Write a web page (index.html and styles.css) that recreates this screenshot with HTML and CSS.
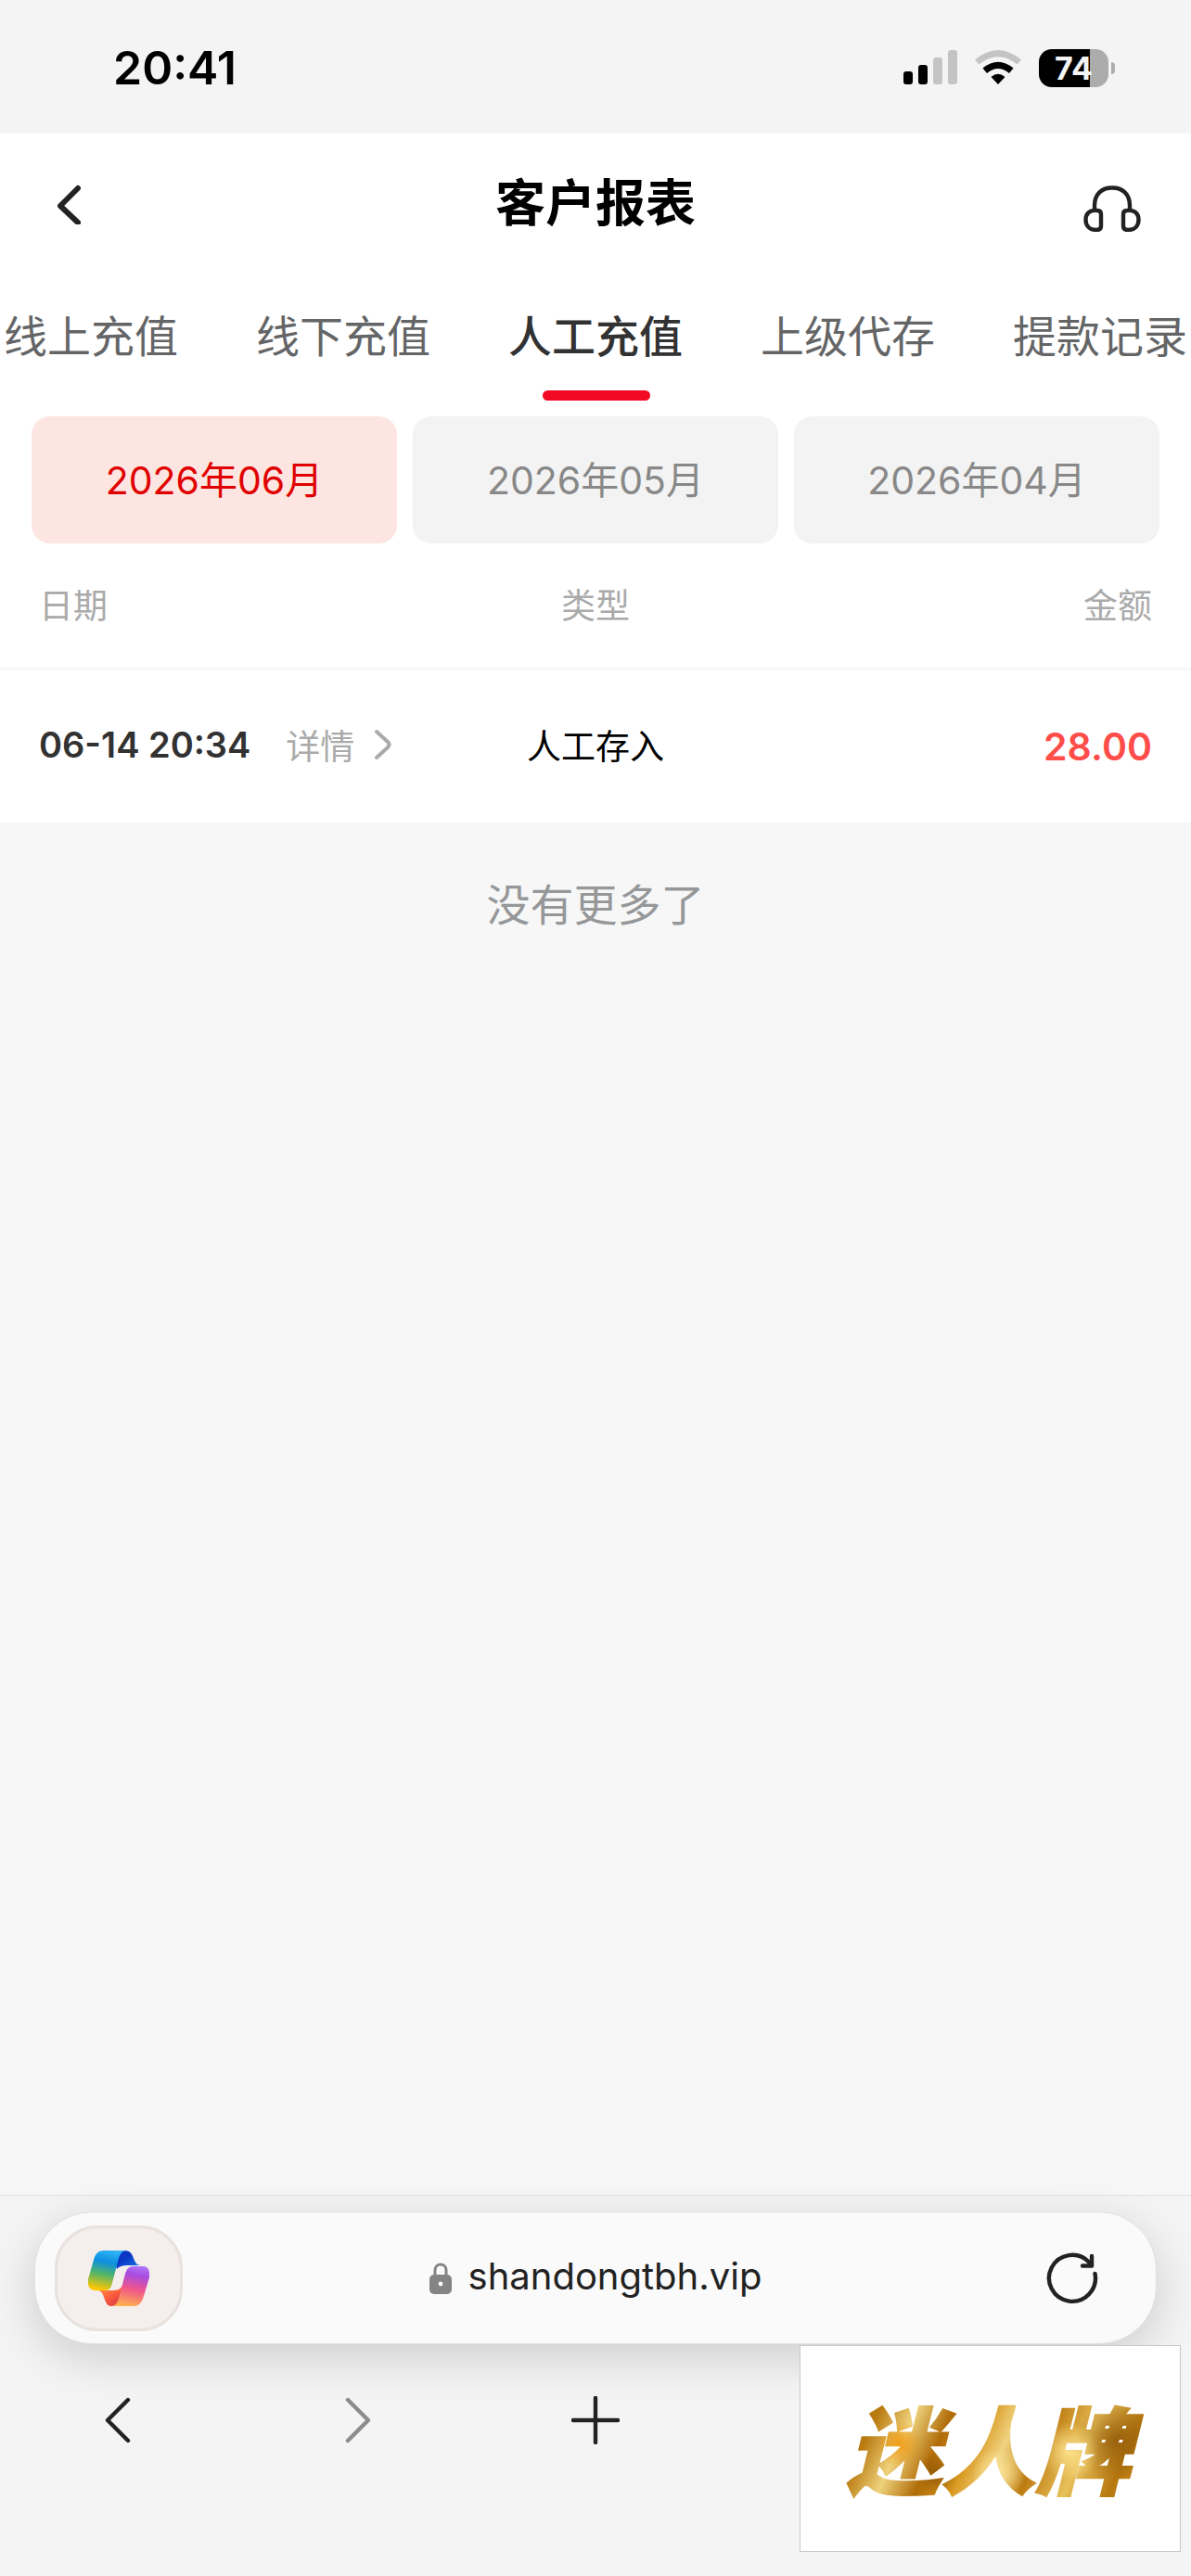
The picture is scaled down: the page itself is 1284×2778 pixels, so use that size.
FILE: index.html
```html
<!DOCTYPE html>
<html lang="zh-CN">
<head>
    <meta charset="UTF-8">
    <meta name="viewport" content="width=device-width, initial-scale=1.0">
    <title>客户报表</title>
    <link rel="stylesheet" href="styles.css">
</head>
<body>

    <div class="status-bar">
        <span class="clock">20:41</span>
        <div class="status-icons">
            <svg width="58" height="38" viewBox="0 0 58 38">
                <rect x="0" y="23" width="10" height="14" rx="3"/>
                <rect x="16" y="16" width="10" height="21" rx="3"/>
                <rect x="32" y="8" width="10" height="29" rx="3" fill="#c4c4c4"/>
                <rect x="48" y="0" width="10" height="37" rx="3" fill="#c4c4c4"/>
            </svg>
            <svg width="50" height="38" viewBox="0 0 50 38">
                <path d="M0 10.500Q25 -10.500 50 10.500L45.500 15.500Q25 -1 4.500 15.500Z" fill="#c4c4c4"/>
                <path d="M8.500 19.500Q25 6 41.500 19.500L37 25Q25 15 13 25Z"/>
                <path d="M17.500 29Q25 22.500 32.500 29L25 37Z"/>
            </svg>
            <div class="battery"><span>74</span></div>
        </div>
    </div>

    <header class="nav-bar">
        <button class="icon-btn" aria-label="返回">
            <svg width="36" height="44" viewBox="-6 0 36 44" fill="none" stroke="#222" stroke-width="6" stroke-linecap="round" stroke-linejoin="round">
                <path d="M24 5L5 24L24 42"/>
            </svg>
        </button>
        <h1>客户报表</h1>
        <button class="icon-btn" aria-label="客服">
            <svg width="62" height="52" viewBox="0 0 62 52" fill="none" stroke="#222" stroke-width="4.400">
                <path d="M12 29V24C12 11 20 4.500 31 4.500S50 11 50 24V29"/>
                <path d="M15 29C6 28 2.500 33 2.500 39S6 50 14 50Q19 50 19 46V33Q19 29 15 29Z"/>
                <path d="M47 29C56 28 59.500 33 59.500 39S56 50 48 50Q43 50 43 46V33Q43 29 47 29Z"/>
            </svg>
        </button>
    </header>

    <nav class="tabs">
        <a href="#">线上充值</a>
        <a href="#">线下充值</a>
        <a href="#" class="active">人工充值</a>
        <a href="#">上级代存</a>
        <a href="#">提款记录</a>
    </nav>

    <div class="months">
        <button class="active">2026年06月</button>
        <button>2026年05月</button>
        <button>2026年04月</button>
    </div>

    <table class="records">
        <thead>
            <tr>
                <th>日期</th>
                <th>类型</th>
                <th>金额</th>
            </tr>
        </thead>
        <tbody>
            <tr>
                <td>
                    <div class="date-cell">
                        <span class="date">06-14 20:34</span>
                        <a href="#" class="detail">详情
                            <svg width="18" height="34" viewBox="0 0 18 34" fill="none" stroke="#aaa" stroke-width="4" stroke-linecap="round">
                                <path d="M2 3L14 14Q17 17 14 20L2 31"/>
                            </svg>
                        </a>
                    </div>
                </td>
                <td>人工存入</td>
                <td class="amount">28.00</td>
            </tr>
        </tbody>
    </table>

    <main class="list-end">没有更多了</main>

    <footer class="browser">
        <div class="address-bar">
            <button class="copilot" aria-label="Copilot">
                <svg width="66" height="60" viewBox="0 0 66 60">
                    <defs>
                        <linearGradient id="left" x1=".6" y1="0" x2=".4" y2="1">
                            <stop offset="0" stop-color="#2fb4f5"/>
                            <stop offset=".3" stop-color="#0f8fe0"/>
                            <stop offset=".6" stop-color="#4fb56c"/>
                            <stop offset=".8" stop-color="#a8bd35"/>
                            <stop offset="1" stop-color="#ffc800"/>
                        </linearGradient>
                        <linearGradient id="right" x1=".6" y1="0" x2=".4" y2="1">
                            <stop offset="0" stop-color="#b070f5"/>
                            <stop offset=".2" stop-color="#a84be0"/>
                            <stop offset=".55" stop-color="#f0558c"/>
                            <stop offset="1" stop-color="#ffb04f"/>
                        </linearGradient>
                        <linearGradient id="top" x1="0" y1="0" x2="1" y2="1">
                            <stop offset=".4" stop-color="#0b35c5"/>
                            <stop offset="1" stop-color="#1680ec"/>
                        </linearGradient>
                        <linearGradient id="bottom" x1="0" y1="0" x2="1" y2="1">
                            <stop offset="0" stop-color="#ff9a4a"/>
                            <stop offset=".5" stop-color="#f95a3c"/>
                            <stop offset="1" stop-color="#c8304a"/>
                        </linearGradient>
                    </defs>
                    <path fill="url(#top)" d="M34 0H40C51 0 47 16 57 16H44C36 16 34 17 31 20L28 12Z"/>
                    <path fill="url(#bottom)" d="M10 43H22C30 43 34 43 36 39L41 42L36 52C33 58 30 60 25 60C16 60 19 43 10 43Z"/>
                    <path fill="url(#left)" d="M17 0H42C36 0 34 4 32 12L26 35C25 40 23 43 18 43H8C2 43 -1 39 0 31L6 10C8 3 11 0 17 0Z"/>
                    <path fill="url(#right)" d="M50 17H59C65 17 67 22 66 29L60 49C58 56 55 60 49 60H24C30 60 32 56 34 48L40 25C42 19 44 17 50 17Z"/>
                </svg>
            </button>
            <div class="site">
                <svg width="24" height="34" viewBox="0 0 24 34">
                    <path d="M6 15V8C6 0 18 0 18 8V15" fill="none" stroke="#848484" stroke-width="3"/>
                    <rect x="0" y="13" width="24" height="21" rx="5" fill="#848484"/>
                    <circle cx="12" cy="23" r="2.400" fill="#fafafa"/>
                </svg>
                <span>shandongtbh.vip</span>
            </div>
            <button class="icon-btn" aria-label="刷新">
                <svg width="56" height="56" viewBox="0 0 56 56" fill="none" stroke="#222" stroke-width="4.400" stroke-linecap="round" stroke-linejoin="round">
                    <path d="M52.500 23A25 25 0 1 1 46 10.500L49 14"/>
                    <path d="M49 4V14.500H39"/>
                </svg>
            </button>
        </div>
        <div class="toolbar">
            <button class="icon-btn" aria-label="后退">
                <svg width="30" height="50" viewBox="0 0 30 50" fill="none" stroke="#222" stroke-width="4.400" stroke-linecap="round" stroke-linejoin="round">
                    <path d="M25 3L3 25L25 47"/>
                </svg>
            </button>
            <button class="icon-btn" aria-label="前进">
                <svg width="30" height="50" viewBox="0 0 30 50" fill="none" stroke="#8c8c8c" stroke-width="4.400" stroke-linecap="round" stroke-linejoin="round">
                    <path d="M5 3L27 25L5 47"/>
                </svg>
            </button>
            <button class="icon-btn" aria-label="新标签页">
                <svg width="52" height="52" viewBox="0 0 52 52" fill="none" stroke="#222" stroke-width="4.400" stroke-linecap="round">
                    <path d="M26 2V50M2 26H50"/>
                </svg>
            </button>
        </div>
        <div class="stamp"><span>迷人牌</span></div>
    </footer>

</body>
</html>
```

FILE: styles.css
```css
* { box-sizing: border-box; }
body {
    margin: 0; min-height: 100vh; display: flex; flex-direction: column;
    background: #f7f7f7; color: #000;
    font-family: Inter, "Noto Sans CJK SC", sans-serif; font-size: 37px;
}
button { border: 0; padding: 0; margin: 0; background: none; font: inherit; cursor: pointer; }
a { color: inherit; text-decoration: none; }
svg { display: block; flex: none; }

/* status bar */
.status-bar {
    display: flex; align-items: center; justify-content: space-between;
    height: 144px; padding: 2px 82px 0 122px; background: #f4f4f4;
}
.clock { font-size: 50px; font-weight: 600; }
.status-icons { display: flex; align-items: center; gap: 19px; }
.battery {
    position: relative; width: 75px; height: 41px; margin-right: 7px; border-radius: 14px;
    background: linear-gradient(to right, #000 74%, #acacac 74%);
    color: #f4f4f4; font-size: 34px; font-weight: 700; line-height: 41px; text-align: center;
}
.battery::after {
    content: ""; position: absolute; right: -7px; top: 14px;
    width: 4px; height: 13px; border-radius: 0 4px 4px 0; background: #acacac;
}

/* page header */
.nav-bar {
    display: flex; align-items: center; justify-content: space-between;
    height: 146px; padding: 6px 54px 0; background: #fff;
}
.nav-bar h1 { margin: 0; font-size: 54px; font-weight: 700; line-height: 80px; }
.nav-bar .icon-btn { flex: 1; display: flex; }
.nav-bar .icon-btn:last-child { justify-content: flex-end; padding-top: 8px; }

.tabs { display: flex; justify-content: center; overflow: hidden; background: #fff; }
.tabs a {
    position: relative; flex: none; width: 272px;
    font-size: 47px; line-height: 146px; text-align: center; color: #646566;
}
.tabs .active { color: #323233; font-weight: 500; }
.tabs .active::after {
    content: ""; position: absolute; left: 50%; bottom: 4px;
    width: 116px; height: 11px; margin-left: -57px; border-radius: 6px; background: #f20a24;
}

.months { display: flex; gap: 17px; padding: 13px 34px 0; background: #fff; }
.months button {
    flex: 1; height: 137px; padding-bottom: 6px; border-radius: 20px;
    background: #f3f3f3; color: #888; font-size: 41px;
}
.months .active { background: #fde5e1; color: #e00000; }

/* records */
.records { width: 100%; table-layout: fixed; border-spacing: 0; background: #fff; }
.records th { height: 137px; padding: 0 0 4px; border-bottom: 3px solid #f7f7f7; color: #aaa; font-weight: 400; }
.records td { height: 164px; padding: 0 0 4px; text-align: center; }
.records tr > :first-child { padding-left: 42px; text-align: left; }
.records tr > :last-child { padding-right: 42px; text-align: right; }
.date-cell { display: flex; align-items: center; gap: 38px; white-space: nowrap; }
.date { color: #323233; font-size: 38px; font-weight: 600; }
.detail { display: flex; align-items: center; gap: 22px; color: #aaa; }
.records .amount { padding-bottom: 0; color: #ff4d4a; font-size: 41px; font-weight: 600; }

.list-end { flex: 1; padding-top: 54px; color: #969799; font-size: 47px; line-height: 70px; text-align: center; }

/* browser chrome */
.browser {
    position: relative; height: 411px; padding: 17px 37px 0;
    border-top: 1px solid #e0e0e0; background: #f4f4f4;
}
.address-bar {
    display: flex; align-items: center; justify-content: space-between;
    height: 143px; padding: 0 21px; border: 1px solid #e0e0e0; border-radius: 62px;
    background: #fafafa; box-shadow: 0 14px 50px rgba(0, 0, 0, .16);
}
.address-bar button { display: flex; align-items: center; justify-content: center; width: 138px; height: 114px; }
.copilot { border: 3px solid #e8e1de; border-radius: 46px; background: #f4efec; }
.site { display: flex; align-items: center; gap: 18px; color: #222; font-size: 40px; }
.site span { padding-bottom: 4px; }
.toolbar { display: grid; grid-template-columns: repeat(5, 1fr); margin: 0 -37px; padding-top: 56px; }
.toolbar .icon-btn { display: flex; align-items: center; justify-content: center; height: 52px; }

.stamp {
    position: absolute; right: 11px; top: 161px; width: 411px; height: 223px;
    display: flex; align-items: center; justify-content: center;
    padding: 0 4px 6px 0; border: 1px solid #c8c8c8; background: #fff;
}
.stamp span {
    font-family: "Noto Sans CJK SC", sans-serif;
    font-size: 102px; font-weight: 900; font-style: italic; line-height: 120px;
    padding: 0 20px;
    color: transparent; -webkit-text-stroke: 2px transparent;
    background:
        radial-gradient(circle at 22% 48%, rgba(240, 150, 10, .9), transparent 9%),
        radial-gradient(circle at 34% 75%, rgba(130, 75, 0, .7), transparent 9%),
        radial-gradient(circle at 53% 75%, rgba(255, 235, 160, .9), transparent 14%),
        radial-gradient(circle at 75% 55%, rgba(255, 230, 145, .9), transparent 12%),
        radial-gradient(circle at 90% 45%, rgba(140, 85, 5, .8), transparent 14%),
        linear-gradient(115deg, #b8790f 0%, #b8790f 16%, #efd27c 26%, #b06c08 36%, #d99a22 46%, #f0d280 54%, #bd7b10 64%, #e8c05a 76%, #b87810 88%, #d8a030 100%);
    -webkit-background-clip: text; background-clip: text;
}
```
